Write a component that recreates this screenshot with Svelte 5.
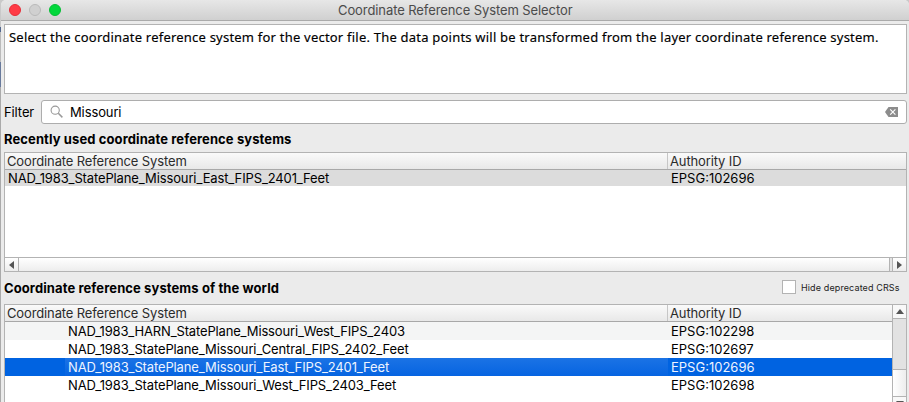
<script>
  const recent = [{ name: 'NAD_1983_StatePlane_Missouri_East_FIPS_2401_Feet', id: 'EPSG:102696' }];
  const world = [
    { name: 'NAD_1983_HARN_StatePlane_Missouri_West_FIPS_2403', id: 'EPSG:102298', kind: 'alt' },
    { name: 'NAD_1983_StatePlane_Missouri_Central_FIPS_2402_Feet', id: 'EPSG:102697', kind: '' },
    { name: 'NAD_1983_StatePlane_Missouri_East_FIPS_2401_Feet', id: 'EPSG:102696', kind: 'selected' },
    { name: 'NAD_1983_StatePlane_Missouri_West_FIPS_2403_Feet', id: 'EPSG:102698', kind: '' }
  ];
</script>

<div class="desktop">
  <div class="window">
    <header class="titlebar">
      <div class="lights"><i class="close"></i><i class="min"></i><i class="max"></i></div>
      <div class="title"><span>Coordinate Reference System Selector</span></div>
    </header>
    <div class="message"><span>Select the coordinate reference system for the vector file. The data points will be transformed from the layer coordinate reference system.</span></div>
    <div class="filter">
      <label for="q">Filter</label>
      <div class="field" id="q">
        <svg class="search" width="14" height="14" viewBox="0 0 14 14"><circle cx="5.2" cy="5.2" r="4.1" fill="none" stroke="#999" stroke-width="1.1" /><path d="M8.3 8.3L12.4 12.4" stroke="#999" stroke-width="1.5" /></svg>
        <span class="query">Missouri</span>
        <svg class="clear" width="13" height="10" viewBox="0 0 13 10"><path d="M0 5L3.5 0H13V10H3.5Z" fill="#8c8c8c" /><path d="M5.2 2.3L10.4 7.7M10.4 2.3L5.2 7.7" stroke="#fff" stroke-width="1.1" /></svg>
      </div>
    </div>
    <h2 class="recent-heading"><span>Recently used coordinate reference systems</span></h2>
    <section class="table recent">
      <div class="head"><div class="name"><span>Coordinate Reference System</span></div><div class="auth"><span>Authority ID</span></div></div>
      {#each recent as row}
        <div class="row used"><div class="name"><span>{row.name}</span></div><div class="auth"><span>{row.id}</span></div></div>
      {/each}
      <div class="blank"></div>
      <div class="hscroll">
        <div class="left"><svg width="5" height="8" viewBox="0 0 5 8"><path d="M5 0V8L0 4Z" fill="#555" /></svg></div>
        <div class="thumb"></div>
        <div class="gap"></div>
        <div class="right"><svg width="5" height="8" viewBox="0 0 5 8"><path d="M0 0V8L5 4Z" fill="#555" /></svg></div>
      </div>
    </section>
    <div class="world-bar">
      <h2><span>Coordinate reference systems of the world</span></h2>
      <div class="check"><i></i><span>Hide deprecated CRSs</span></div>
    </div>
    <section class="table world">
      <div class="content">
        <div class="head"><div class="name"><span>Coordinate Reference System</span></div><div class="auth"><span>Authority ID</span></div></div>
        {#each world as row}
          <div class="row {row.kind}"><div class="name"><span>{row.name}</span></div><div class="auth"><span>{row.id}</span></div></div>
        {/each}
      </div>
      <div class="vscroll">
        <div class="up"><svg width="8" height="5" viewBox="0 0 8 5"><path d="M0 5H8L4 0Z" fill="#555" /></svg></div>
        <div class="track"></div>
        <div class="thumb"></div>
        <div class="down"><svg width="8" height="5" viewBox="0 0 8 5"><path d="M0 0H8L4 5Z" fill="#555" /></svg></div>
      </div>
    </section>
  </div>
</div>

<style>
  :global(body) { margin: 0; overflow: hidden; }
  .desktop { width: 909px; height: 402px; box-sizing: border-box; padding-left: 1px; overflow: hidden; background: linear-gradient(#c9c9c9 0 27px, #52678f 27px 32px, #bbb 32px 62px, #687a9c 62px 87px, #aaa 87px); font-family: Inter, "Liberation Sans", sans-serif; font-size: 13px; color: #000; }
  .window { width: 908px; height: 402px; box-sizing: border-box; background: #ebebeb; border-radius: 5px 5px 0 0; padding: 0 2px 0 3px; overflow: hidden; display: flex; flex-direction: column; white-space: nowrap; }
  .titlebar { height: 20px; flex: none; margin: 0 -2px 3px -3px; display: flex; align-items: center; background: linear-gradient(#e7e7e7, #d0d0d0); border-bottom: 1px solid #aaa; }
  .lights { display: flex; gap: 8px; padding-left: 8px; width: 300px; flex: none; }
  .lights i { width: 12px; height: 12px; border-radius: 50%; box-sizing: border-box; }
  .close { background: #ff3b46; border: 1px solid #e52e38; }
  .min { background: #d0d0d0; border: 1px solid #b9b9b9; }
  .max { background: #02d83c; border: 1px solid #05bd35; }
  .title { padding-left: 29px; color: #4b4b4b; letter-spacing: -0.09px; }
  .message { height: 70px; flex: none; width: 903px; box-sizing: border-box; border: 1px solid #b3b3b3; background: #fff; padding: 4px 0 0 4px; font: 13px/17px "Noto Sans", sans-serif; letter-spacing: 0.216px; -webkit-text-stroke: 0.15px #000; }
  .filter { display: flex; align-items: center; height: 24px; flex: none; margin-top: 6px; }
  .filter label { width: 37px; letter-spacing: -0.1px; }
  .field { width: 866px; height: 24px; box-sizing: border-box; border: 1px solid #adadad; border-radius: 3px; background: #fff; display: flex; align-items: center; }
  .search { margin-left: 8px; }
  .query { margin-left: 6px; flex: 1; letter-spacing: -0.12px; }
  .clear { margin-right: 8px; }
  h2 { margin: 0; font-size: 13px; font-weight: 700; line-height: 16px; letter-spacing: 0.1px; }
  .recent-heading { margin: 7px 0 5px; height: 16px; flex: none; }
  .table { width: 903px; box-sizing: border-box; border: 1px solid #b3b3b3; background: #fff; flex: none; }
  .recent { height: 120px; display: flex; flex-direction: column; }
  .head { height: 17px; box-sizing: border-box; flex: none; display: flex; border-bottom: 1px solid #a8a8a8; background: linear-gradient(#fafafa, #e8e8e8); line-height: 16px; color: #2b2b2b; letter-spacing: -0.13px; }
  .head .name { width: 663px; box-sizing: border-box; padding-left: 2px; border-right: 1px solid #c6c6c6; }
  .head .auth { padding-left: 2px; }
  .row { display: flex; height: 18px; line-height: 18px; }
  .row .name { width: 663px; box-sizing: border-box; padding-left: 63px; letter-spacing: -0.125px; }
  .row .auth { flex: 1; padding-left: 3px; }
  .alt .name { letter-spacing: -0.155px; }
  .used { height: 16px; line-height: 17px; background: #dcdcdc; }
  .used .name { padding-left: 3px; }
  .blank { flex: 1; }
  .hscroll { height: 14px; box-sizing: border-box; border-top: 1px solid #b3b3b3; display: flex; background: linear-gradient(#fff, #ededed); }
  .hscroll div { display: flex; align-items: center; justify-content: center; box-sizing: border-box; }
  .left { width: 14px; border-right: 1px solid #b3b3b3; }
  .hscroll .thumb { flex: 1; border-right: 1px solid #b3b3b3; }
  .gap { width: 2px; background: #e4e4e4; }
  .right { width: 14px; border-left: 1px solid #b3b3b3; }
  .world-bar { height: 32px; flex: none; display: flex; justify-content: space-between; align-items: center; }
  .check { display: flex; align-items: center; gap: 5px; font-size: 9px; color: #222; width: 125px; letter-spacing: 0.12px; margin-top: -2px; }
  .check i { width: 14px; height: 14px; box-sizing: border-box; border: 1px solid #b3b3b3; background: #fff; }
  .world { height: 99px; border-bottom: 0; display: flex; }
  .content { width: 887px; flex: none; }
  .alt { background: #f4f5f5; }
  .selected { background: #0063e1; color: #eef4ff; }
  .selected .name { background: linear-gradient(90deg, #0063e1 0 60px, transparent 60px), linear-gradient(#1b73e5, #0664e1); }
  .vscroll { width: 14px; box-sizing: border-box; border-left: 1px solid #b3b3b3; display: flex; flex-direction: column; }
  .vscroll div { box-sizing: border-box; border-bottom: 1px solid #b3b3b3; flex: none; }
  .up { height: 14px; display: flex; align-items: center; justify-content: center; background: #f8f8f8; }
  .track { height: 51px; background: #e2e2e2; }
  .vscroll .thumb { height: 27px; background: linear-gradient(90deg, #fff, #ededed); }
  .down { height: 14px; display: flex; justify-content: center; padding-top: 4px; background: #f8f8f8; }
</style>
